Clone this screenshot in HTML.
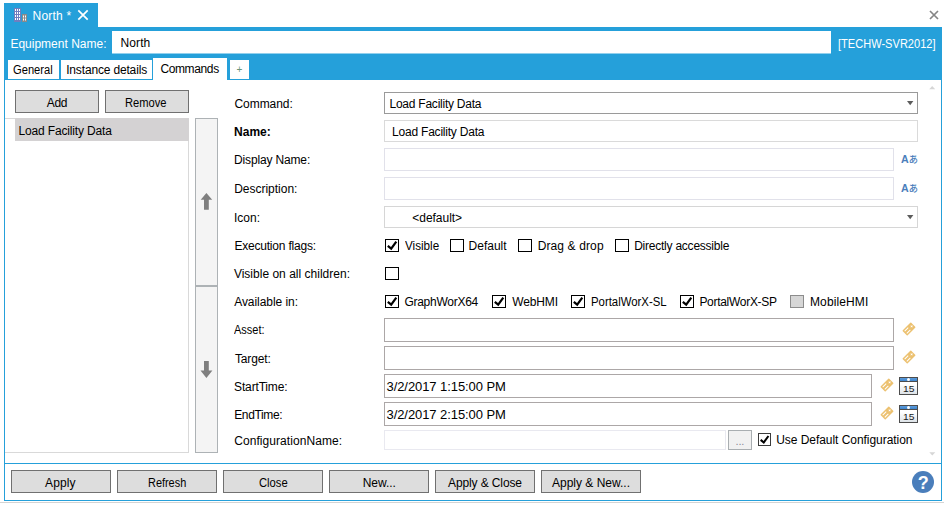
<!DOCTYPE html>
<html><head><meta charset="utf-8"><title>North</title>
<style>
*{box-sizing:border-box;margin:0;padding:0}
html,body{width:945px;height:507px;overflow:hidden;background:#fff}
body{position:relative;font-family:"Liberation Sans","Noto Sans CJK JP",sans-serif;font-size:12px;color:#000}
.a{position:absolute}
.t{position:absolute;white-space:nowrap;line-height:16px;height:16px;transform-origin:0 0}
.blue{background:#25a0da}
.btn{position:absolute;background:#dddddd;border:1px solid #707070;height:23px}
.inp{position:absolute;background:#fff;border:1px solid #aca7a7;height:22px}
.inp.l{border-color:#e1e1ea}
.cb{position:absolute;width:14px;height:13px;border:1px solid #000;background:#fff}
.cb svg{position:absolute;left:0;top:0}
</style></head><body>
<!-- window chrome -->
<div class="a blue" style="left:4px;top:3px;width:94px;height:25px"></div>
<div class="a blue" style="left:4px;top:27px;width:938px;height:53px"></div>
<div class="a blue" style="left:4px;top:80px;width:1px;height:421px"></div>
<div class="a blue" style="left:941px;top:80px;width:1px;height:421px"></div>
<div class="a blue" style="left:4px;top:463px;width:938px;height:1px"></div>
<div class="a blue" style="left:4px;top:500px;width:938px;height:1px"></div>
<div class="a" style="left:0;top:502px;width:944px;height:1px;background:#d4d4d4"></div>
<!-- tab icon -->
<svg class="a" style="left:14px;top:8px" width="14" height="14" viewBox="0 0 14 14">
<rect x="0" y="0" width="7" height="14" fill="#6f7fc0"/>
<g fill="#fff"><rect x="1" y="1" width="1" height="2"/><rect x="3" y="1" width="1" height="2"/><rect x="5" y="1" width="1" height="2"/>
<rect x="1" y="4" width="1" height="2"/><rect x="3" y="4" width="1" height="2"/><rect x="5" y="4" width="1" height="2"/>
<rect x="1" y="7" width="1" height="2"/><rect x="3" y="7" width="1" height="2"/><rect x="5" y="7" width="1" height="2"/>
<rect x="1" y="10" width="1" height="2"/><rect x="3" y="10" width="1" height="2"/><rect x="5" y="10" width="1" height="2"/></g>
<rect x="8" y="6" width="5" height="8" fill="#8a8a8a"/>
<g fill="#fff"><rect x="9" y="7.5" width="1" height="2"/><rect x="11" y="7.5" width="1" height="2"/><rect x="9" y="10.5" width="1" height="2"/><rect x="11" y="10.5" width="1" height="2"/></g>
</svg>
<!-- tab close X -->
<svg class="a" style="left:77px;top:9px" width="12" height="12" viewBox="0 0 12 12"><path d="M1.3 1.3 L10.7 10.7 M10.7 1.3 L1.3 10.7" stroke="#fff" stroke-width="1.7" fill="none"/></svg>
<!-- window close X -->
<svg class="a" style="left:929px;top:10px" width="10" height="10" viewBox="0 0 10 10"><path d="M1 1 L9 9 M9 1 L1 9" stroke="#858585" stroke-width="1.7" fill="none"/></svg>
<!-- equipment name input -->
<div class="a" style="left:112px;top:31px;width:719px;height:22px;background:#fff"></div>
<div class="a" style="left:112px;top:53px;width:719px;height:1px;background:#fff;opacity:.5"></div>
<!-- sub tabs -->
<div class="a" style="left:8px;top:60px;width:51px;height:19px;background:#fff"></div>
<div class="a" style="left:61px;top:60px;width:91px;height:19px;background:#fff"></div>
<div class="a" style="left:153px;top:58px;width:74px;height:22px;background:#fff"></div>
<div class="a" style="left:230px;top:60px;width:19px;height:19px;background:#fff"></div>
<div class="t" style="left:236.6px;top:62px;color:#6b9478;font-size:10px">+</div>
<!-- left panel -->
<div class="btn" style="left:15px;top:90px;width:84px"></div>
<div class="btn" style="left:105px;top:90px;width:84px"></div>
<div class="a" style="left:5px;top:118px;width:10px;height:1px;background:#d9d9d9"></div>
<div class="a" style="left:188px;top:118px;width:1px;height:335px;background:#d9d9d9"></div>
<div class="a" style="left:5px;top:452px;width:184px;height:1px;background:#d9d9d9"></div>
<div class="a" style="left:15px;top:118px;width:174px;height:23px;background:#d4d2d3"></div>
<div class="a" style="left:195px;top:118px;width:23px;height:168px;background:#f4f4f4;border:1px solid #adb2b5"></div>
<div class="a" style="left:195px;top:286px;width:23px;height:167px;background:#f4f4f4;border:1px solid #adb2b5"></div>
<svg class="a" style="left:196px;top:188px" width="21" height="26" viewBox="196 188 21 26"><path d="M206.4 192.9 L212.2 199.8 H208.8 V209.7 H204 V199.8 H200.7 Z" fill="#7f7f7f"/></svg>
<svg class="a" style="left:196px;top:356px" width="21" height="26" viewBox="196 356 21 26"><path d="M206.4 378.1 L212.4 370.5 H208.8 V361 H204 V370.5 H200.5 Z" fill="#7f7f7f"/></svg>
<!-- inputs -->
<div class="inp" style="left:384px;top:92px;width:534px;border-color:#9a9a9a"></div>
<svg class="a" style="left:906px;top:100px" width="9" height="7" viewBox="906 100 9 7"><path d="M907 101 H913.4 L910.2 105.2 Z" fill="#5c5c5c"/></svg>
<div class="inp l" style="left:384px;top:120px;width:534px;border-color:#dadada"></div>
<div class="inp l" style="left:384px;top:148px;width:510px;height:23px"></div>
<div class="inp l" style="left:384px;top:177px;width:510px;height:23px"></div>
<div class="inp l" style="left:384px;top:206px;width:534px;border-color:#d6d6d6"></div>
<svg class="a" style="left:906px;top:214px" width="9" height="7" viewBox="906 214 9 7"><path d="M907 215 H913.4 L910.2 219.2 Z" fill="#5c5c5c"/></svg>
<div class="inp" style="left:384px;top:318px;width:510px;height:24px"></div>
<div class="inp" style="left:384px;top:346px;width:510px;height:24px"></div>
<div class="inp" style="left:384px;top:374px;width:488px;height:24px"></div>
<div class="inp" style="left:384px;top:402px;width:488px;height:24px"></div>
<div class="inp l" style="left:384px;top:430px;width:342px;height:20px;border-color:#e9e9f0"></div>
<!-- checkboxes -->
<div class="cb" style="left:385px;top:239px"><svg width="12" height="11" viewBox="0 0 12 11"><path d="M1.8 5.9 L5.2 8.7 L10.3 1.7" stroke="#000" stroke-width="2.2" fill="none"/></svg></div>
<div class="cb" style="left:450px;top:239px"></div>
<div class="cb" style="left:518px;top:239px"></div>
<div class="cb" style="left:615px;top:239px"></div>
<div class="cb" style="left:385px;top:267px"></div>
<div class="cb" style="left:385px;top:295px"><svg width="12" height="11" viewBox="0 0 12 11"><path d="M1.8 5.9 L5.2 8.7 L10.3 1.7" stroke="#000" stroke-width="2.2" fill="none"/></svg></div>
<div class="cb" style="left:492px;top:295px"><svg width="12" height="11" viewBox="0 0 12 11"><path d="M1.8 5.9 L5.2 8.7 L10.3 1.7" stroke="#000" stroke-width="2.2" fill="none"/></svg></div>
<div class="cb" style="left:571px;top:295px"><svg width="12" height="11" viewBox="0 0 12 11"><path d="M1.8 5.9 L5.2 8.7 L10.3 1.7" stroke="#000" stroke-width="2.2" fill="none"/></svg></div>
<div class="cb" style="left:680px;top:295px"><svg width="12" height="11" viewBox="0 0 12 11"><path d="M1.8 5.9 L5.2 8.7 L10.3 1.7" stroke="#000" stroke-width="2.2" fill="none"/></svg></div>
<div class="cb" style="left:790px;top:295px;background:#d6d6d6;border-color:#8c8c8c"></div>
<div class="cb" style="left:758px;top:433px;width:13px;height:13px;border-color:#3c3c3c"><svg width="11" height="11" viewBox="0 0 12 11"><path d="M1.8 5.9 L5.2 8.7 L10.3 1.7" stroke="#000" stroke-width="2.2" fill="none"/></svg></div>
<!-- ... button -->
<div class="a" style="left:728px;top:430px;width:24px;height:20px;background:#f1f1f1;border:1px solid #a9aeb1"></div>
<div class="t" style="left:735.6px;top:433px;color:#8a8a96;font-size:11px;letter-spacing:-0.2px">...</div>
<!-- bottom buttons -->
<div class="btn" style="left:11px;top:470px;width:100px"></div>
<div class="btn" style="left:117px;top:470px;width:100px"></div>
<div class="btn" style="left:223px;top:470px;width:100px"></div>
<div class="btn" style="left:329px;top:470px;width:100px"></div>
<div class="btn" style="left:435px;top:470px;width:100px"></div>
<div class="btn" style="left:541px;top:470px;width:100px"></div>
<!-- help -->
<div class="a" style="left:912px;top:471px;width:22px;height:22px;border-radius:11px;background:#4a7ebb"></div>
<div class="t" style="left:917.7px;top:472.8px;height:20px;line-height:20px;color:#fff;font-weight:bold;font-size:18px">?</div>
<!-- scrollbar arrows -->
<svg class="a" style="left:928px;top:85px" width="9" height="6" viewBox="928 85 9 6"><path d="M929.2 89.2 H935.2 L932.2 86 Z" fill="#d6d6d6"/></svg>
<svg class="a" style="left:928px;top:451px" width="9" height="6" viewBox="928 451 9 6"><path d="M929.3 452.2 H935.3 L932.3 455.4 Z" fill="#d6d6d6"/></svg>
<!-- tag icons -->
<svg class="a" style="left:900.45px;top:320.4px" width="18" height="18" viewBox="-9 -9 18 18"><g transform="rotate(-45)"><rect x="-6" y="-3.5" width="12" height="7" rx="0.7" fill="#ecc170"/><path d="M3.7 -1.5 L4.2 -0.5 L5.2 0 L4.2 0.5 L3.7 1.5 L3.2 0.5 L2.2 0 L3.2 -0.5 Z" fill="#fff"/><rect x="-4.6" y="-2" width="5" height="1" fill="#fff"/><rect x="-4.6" y="1" width="5" height="1" fill="#fff"/></g></svg>
<svg class="a" style="left:900.45px;top:348.4px" width="18" height="18" viewBox="-9 -9 18 18"><g transform="rotate(-45)"><rect x="-6" y="-3.5" width="12" height="7" rx="0.7" fill="#ecc170"/><path d="M3.7 -1.5 L4.2 -0.5 L5.2 0 L4.2 0.5 L3.7 1.5 L3.2 0.5 L2.2 0 L3.2 -0.5 Z" fill="#fff"/><rect x="-4.6" y="-2" width="5" height="1" fill="#fff"/><rect x="-4.6" y="1" width="5" height="1" fill="#fff"/></g></svg>
<svg class="a" style="left:878px;top:376px" width="18" height="18" viewBox="-9 -9 18 18"><g transform="rotate(-45)"><rect x="-6" y="-3.5" width="12" height="7" rx="0.7" fill="#ecc170"/><path d="M3.7 -1.5 L4.2 -0.5 L5.2 0 L4.2 0.5 L3.7 1.5 L3.2 0.5 L2.2 0 L3.2 -0.5 Z" fill="#fff"/><rect x="-4.6" y="-2" width="5" height="1" fill="#fff"/><rect x="-4.6" y="1" width="5" height="1" fill="#fff"/></g></svg>
<svg class="a" style="left:878px;top:404px" width="18" height="18" viewBox="-9 -9 18 18"><g transform="rotate(-45)"><rect x="-6" y="-3.5" width="12" height="7" rx="0.7" fill="#ecc170"/><path d="M3.7 -1.5 L4.2 -0.5 L5.2 0 L4.2 0.5 L3.7 1.5 L3.2 0.5 L2.2 0 L3.2 -0.5 Z" fill="#fff"/><rect x="-4.6" y="-2" width="5" height="1" fill="#fff"/><rect x="-4.6" y="1" width="5" height="1" fill="#fff"/></g></svg>
<!-- calendars -->
<div class="a" style="left:899px;top:377px;width:19px;height:18px;border:1px solid #4c4c4c;background:linear-gradient(#fff 40%,#dde3e8)"><div class="a" style="left:0;top:0;width:17px;height:4px;background:linear-gradient(#5b9bdc,#3f85cc);border-bottom:1px solid #4c4c4c"></div><div class="a" style="left:7.2px;top:0.2px;width:2.8px;height:2.8px;border-radius:2px;background:#fff"></div></div>
<div class="a" style="left:899px;top:405px;width:19px;height:18px;border:1px solid #4c4c4c;background:linear-gradient(#fff 40%,#dde3e8)"><div class="a" style="left:0;top:0;width:17px;height:4px;background:linear-gradient(#5b9bdc,#3f85cc);border-bottom:1px solid #4c4c4c"></div><div class="a" style="left:7.2px;top:0.2px;width:2.8px;height:2.8px;border-radius:2px;background:#fff"></div></div>
<div class="t" id="t_tab" style="left:32.60px;top:8px;font-size:12px;letter-spacing:0.210px;color:#fff;">North *</div>
<div class="t" id="t_eql" style="left:10.40px;top:36px;font-size:12px;letter-spacing:0.006px;color:#fff;">Equipment Name:</div>
<div class="t" id="t_eqv" style="left:120.60px;top:35px;font-size:12px;letter-spacing:0.090px;">North</div>
<div class="t" id="t_svr" style="left:838.20px;top:36px;font-size:12px;transform:scaleX(0.9220);color:#fff;">[TECHW-SVR2012]</div>
<div class="t" id="t_gen" style="left:13.00px;top:62px;font-size:12px;transform:scaleX(0.9302);">General</div>
<div class="t" id="t_ins" style="left:66.20px;top:62px;font-size:12px;letter-spacing:-0.162px;">Instance details</div>
<div class="t" id="t_cmd" style="left:160.40px;top:61px;font-size:12px;letter-spacing:-0.373px;">Commands</div>
<div class="t" id="t_add" style="left:46.80px;top:95px;font-size:12px;letter-spacing:-0.360px;">Add</div>
<div class="t" id="t_rem" style="left:125.20px;top:95px;font-size:12px;transform:scaleX(0.9290);">Remove</div>
<div class="t" id="t_lfd" style="left:18.50px;top:123px;font-size:12px;letter-spacing:-0.159px;">Load Facility Data</div>
<div class="t" id="l_cmd" style="left:234.50px;top:96px;font-size:12px;letter-spacing:-0.064px;">Command:</div>
<div class="t" id="l_nam" style="left:234.10px;top:124px;font-size:12px;letter-spacing:-0.023px;font-weight:bold;">Name:</div>
<div class="t" id="l_dis" style="left:234.10px;top:152px;font-size:12px;letter-spacing:-0.158px;">Display Name:</div>
<div class="t" id="l_des" style="left:234.20px;top:181px;font-size:12px;letter-spacing:-0.016px;">Description:</div>
<div class="t" id="l_ico" style="left:234.00px;top:210px;font-size:12px;letter-spacing:-0.000px;">Icon:</div>
<div class="t" id="l_exe" style="left:234.40px;top:238px;font-size:12px;letter-spacing:-0.204px;">Execution flags:</div>
<div class="t" id="l_vis" style="left:233.90px;top:266px;font-size:12px;letter-spacing:0.010px;">Visible on all children:</div>
<div class="t" id="l_ava" style="left:234.20px;top:294px;font-size:12px;letter-spacing:-0.050px;">Available in:</div>
<div class="t" id="l_ass" style="left:234.00px;top:322px;font-size:12px;transform:scaleX(0.9154);">Asset:</div>
<div class="t" id="l_tar" style="left:235.00px;top:351px;font-size:12px;letter-spacing:-0.150px;">Target:</div>
<div class="t" id="l_sta" style="left:234.10px;top:379px;font-size:12px;letter-spacing:-0.160px;">StartTime:</div>
<div class="t" id="l_end" style="left:234.20px;top:407px;font-size:12px;letter-spacing:-0.347px;">EndTime:</div>
<div class="t" id="l_con" style="left:234.20px;top:433px;font-size:12px;letter-spacing:0.069px;">ConfigurationName:</div>
<div class="t" id="v_cmd" style="left:389.50px;top:96px;font-size:12px;letter-spacing:-0.238px;">Load Facility Data</div>
<div class="t" id="v_nam" style="left:392.10px;top:124px;font-size:12px;letter-spacing:-0.217px;">Load Facility Data</div>
<div class="t" id="v_ico" style="left:412.30px;top:210px;font-size:12px;letter-spacing:-0.034px;">&lt;default&gt;</div>
<div class="t" id="v_sta" style="left:386.50px;top:379px;font-size:13px;letter-spacing:-0.075px;">3/2/2017 1:15:00 PM</div>
<div class="t" id="v_end" style="left:386.50px;top:407px;font-size:13px;letter-spacing:-0.075px;">3/2/2017 2:15:00 PM</div>
<div class="t" id="c_vis" style="left:404.50px;top:238px;font-size:12px;transform:scaleX(0.9731);">Visible</div>
<div class="t" id="c_def" style="left:468.60px;top:238px;font-size:12px;letter-spacing:-0.015px;">Default</div>
<div class="t" id="c_dra" style="left:537.70px;top:238px;font-size:12px;letter-spacing:0.117px;">Drag &amp; drop</div>
<div class="t" id="c_dir" style="left:634.20px;top:238px;font-size:12px;letter-spacing:-0.235px;">Directly accessible</div>
<div class="t" id="c_gra" style="left:404.40px;top:294px;font-size:12px;letter-spacing:-0.261px;">GraphWorX64</div>
<div class="t" id="c_web" style="left:512.20px;top:294px;font-size:12px;letter-spacing:-0.126px;">WebHMI</div>
<div class="t" id="c_psl" style="left:590.70px;top:294px;font-size:12px;transform:scaleX(0.9475);">PortalWorX-SL</div>
<div class="t" id="c_psp" style="left:699.40px;top:294px;font-size:12px;letter-spacing:-0.293px;">PortalWorX-SP</div>
<div class="t" id="c_mob" style="left:810.00px;top:294px;font-size:12px;letter-spacing:0.113px;">MobileHMI</div>
<div class="t" id="c_use" style="left:776.20px;top:432px;font-size:12px;letter-spacing:-0.045px;">Use Default Configuration</div>
<div class="t" id="i_aa1" style="left:900.90px;top:151px;font-size:11.5px;transform:scaleX(0.9226);font-weight:bold;color:#4a7ebb;">A<span style="font-size:10px;font-weight:500">あ</span></div>
<div class="t" id="i_aa2" style="left:900.90px;top:180px;font-size:11.5px;transform:scaleX(0.9226);font-weight:bold;color:#4a7ebb;">A<span style="font-size:10px;font-weight:500">あ</span></div>
<div class="t" id="k_1" style="left:902.70px;top:381px;font-size:9.5px;transform:scaleX(1.0840);color:#1a1a1a;">15</div>
<div class="t" id="k_2" style="left:902.70px;top:409px;font-size:9.5px;transform:scaleX(1.0840);color:#1a1a1a;">15</div>
<div class="t" id="b_app" style="left:45.10px;top:475px;font-size:12px;letter-spacing:0.090px;">Apply</div>
<div class="t" id="b_ref" style="left:147.80px;top:475px;font-size:12px;transform:scaleX(0.9097);">Refresh</div>
<div class="t" id="b_clo" style="left:259.00px;top:475px;font-size:12px;transform:scaleX(0.9355);">Close</div>
<div class="t" id="b_new" style="left:362.70px;top:475px;font-size:12px;letter-spacing:-0.036px;">New...</div>
<div class="t" id="b_acl" style="left:448.00px;top:475px;font-size:12px;letter-spacing:-0.112px;">Apply &amp; Close</div>
<div class="t" id="b_ane" style="left:552.00px;top:475px;font-size:12px;">Apply &amp; New...</div>
</body></html>
